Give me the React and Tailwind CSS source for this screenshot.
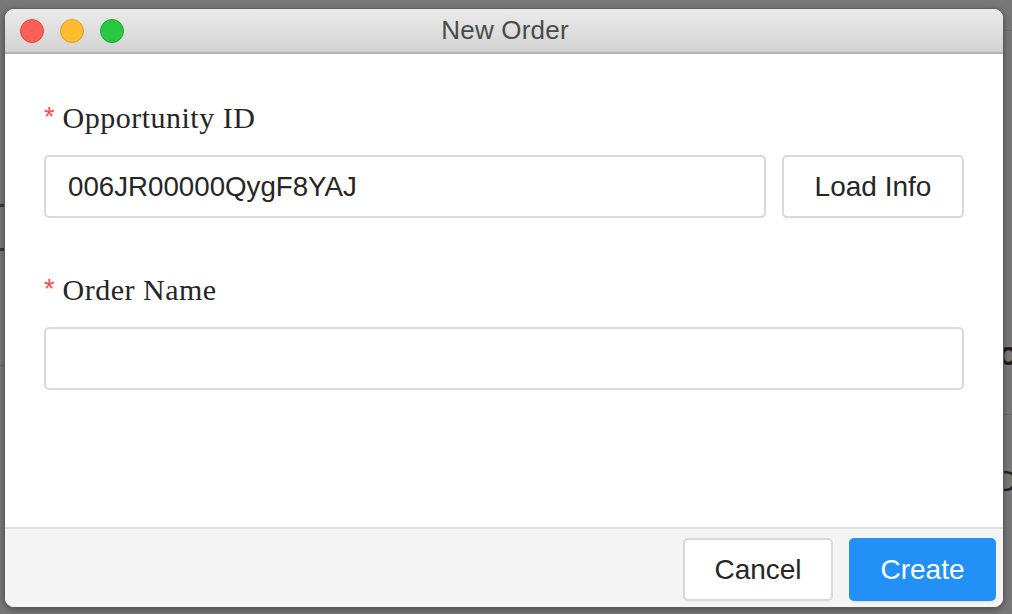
import React from "react";

const sans = { fontFamily: '"Liberation Sans", Arial, sans-serif' };
const serif = { fontFamily: '"Liberation Serif", "Times New Roman", serif' };

function Label({ children }) {
  return (
    <div className="flex items-start h-[40px] text-[#262626]">
      <span
        className="text-[27px] text-[#ff4d4f] leading-none mr-[8px] mt-[6px]"
        style={sans}
      >
        *
      </span>
      <span className="text-[30px] leading-[40px] tracking-[0.5px]" style={serif}>
        {children}
      </span>
    </div>
  );
}

export default function App() {
  return (
    <div className="relative w-[1012px] h-[614px] overflow-hidden bg-[#787878] pt-[8px] pl-[4px]">
      {/* background app fragments */}
      <div className="absolute left-0 top-[204px] w-[4px] h-[3px] bg-[#3a3a3a]" />
      <div className="absolute left-0 top-[248px] w-[4px] h-[3px] bg-[#3a3a3a]" />
      <div className="absolute left-0 top-[365px] w-[4px] h-[1px] bg-[#6a6a6a]" />
      <div className="absolute right-0 top-[30px] w-[8px] h-[1px] bg-[#6c6c6c]" />
      <div className="absolute right-0 top-[414px] w-[8px] h-[1px] bg-[#6c6c6c]" />
      <div
        className="absolute left-[998px] top-[336px] text-[34px] font-bold leading-none text-[#1a1a1a]"
        style={sans}
      >
        o
      </div>
      <div
        className="absolute left-[996px] top-[466px] text-[30px] leading-none text-[#222]"
        style={sans}
      >
        D
      </div>

      {/* window */}
      <div className="relative w-[1000px] h-[600px] rounded-[10px] border border-[#5c5c5c] shadow-[0_2px_6px_rgba(0,0,0,0.35)] flex flex-col overflow-hidden bg-white">
        {/* title bar */}
        <div className="relative h-[45px] shrink-0 bg-gradient-to-b from-[#ebebeb] to-[#d2d2d2] border-b-2 border-[#b3b3b3] flex items-center px-[15px]">
          <div className="flex gap-[16px]">
            <div className="w-[24px] h-[24px] rounded-full bg-[#ff5f57] border border-[#e1443f]" />
            <div className="w-[24px] h-[24px] rounded-full bg-[#febc2e] border border-[#dea123]" />
            <div className="w-[24px] h-[24px] rounded-full bg-[#28c840] border border-[#1aab29]" />
          </div>
          <div
            className="absolute inset-0 flex items-center justify-center text-[26px] text-[#4a4a4a] tracking-[0.2px] pl-[2px]"
            style={sans}
          >
            New Order
          </div>
        </div>

        {/* body */}
        <div className="flex-1 px-[39px] pt-[44px]">
          <Label>Opportunity ID</Label>
          <div className="flex gap-[16px] mt-[17px]">
            <div
              className="flex-1 h-[63px] border-2 border-[#d9d9d9] rounded-[5px] flex items-center pl-[22px] text-[27.7px] text-[#262626]"
              style={sans}
            >
              006JR00000QygF8YAJ
            </div>
            <button
              className="w-[182px] h-[63px] border-2 border-[#d9d9d9] rounded-[5px] bg-white text-[28px] text-[#262626] shadow-[0_2px_0_rgba(0,0,0,0.02)]"
              style={sans}
            >
              Load Info
            </button>
          </div>

          <div className="mt-[52px]">
            <Label>Order Name</Label>
          </div>
          <div className="mt-[17px] h-[63px] border-2 border-[#d9d9d9] rounded-[5px]" />
        </div>

        {/* footer */}
        <div className="h-[80px] shrink-0 border-t-2 border-[#dfe2e6] bg-[#f4f4f4] flex justify-end gap-[16px] pr-[7px] pt-[9px]">
          <button
            className="w-[150px] h-[63px] border-2 border-[#d9d9d9] rounded-[5px] bg-white text-[28px] text-[#262626] shadow-[0_2px_0_rgba(0,0,0,0.02)]"
            style={sans}
          >
            Cancel
          </button>
          <button
            className="w-[147px] h-[63px] rounded-[5px] bg-[#2290f6] text-[28px] text-white shadow-[0_2px_0_rgba(0,0,0,0.045)]"
            style={sans}
          >
            Create
          </button>
        </div>
      </div>
    </div>
  );
}
